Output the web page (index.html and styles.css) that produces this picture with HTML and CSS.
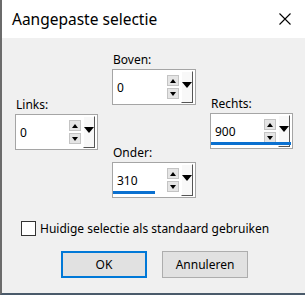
FILE: index.html
```html
<!DOCTYPE html>
<html>
<head>
<meta charset="utf-8">
<link rel="stylesheet" href="styles.css">
</head>
<body>
<div class="dialog">
  <div class="titlebar">
    <span class="title">Aangepaste selectie</span>
    <svg class="close" width="12" height="12" viewBox="0 0 12 12"><path d="M0.5 0.5 L11.5 11.5 M11.5 0.5 L0.5 11.5" stroke="#000" stroke-width="1.1" fill="none"/></svg>
  </div>
  <div class="body">
    <div class="fields">
      <div class="col col-side col-left">
        <div class="field">
          <div class="label">Links:</div>
          <div class="box"><span class="val">0</span>
            <div class="spin"><span class="sb up"></span><span class="sb down"></span></div>
            <span class="drop"></span>
          </div>
        </div>
      </div>
      <div class="col col-mid">
        <div class="field">
          <div class="label">Boven:</div>
          <div class="box"><span class="val">0</span>
            <div class="spin"><span class="sb up"></span><span class="sb down"></span></div>
            <span class="drop"></span>
          </div>
        </div>
        <div class="field">
          <div class="label">Onder:</div>
          <div class="box"><span class="val">310</span>
            <div class="spin"><span class="sb up"></span><span class="sb down"></span></div>
            <span class="drop"></span>
            <span class="bar" style="width:42px"></span>
          </div>
        </div>
      </div>
      <div class="col col-side col-right">
        <div class="field">
          <div class="label">Rechts:</div>
          <div class="box"><span class="val">900</span>
            <div class="spin"><span class="sb up"></span><span class="sb down"></span></div>
            <span class="drop"></span>
            <span class="bar" style="width:80px"></span>
          </div>
        </div>
      </div>
    </div>
    <label class="check"><span class="cb"></span><span>Huidige selectie als standaard gebruiken</span></label>
    <div class="buttons">
      <button class="btn default">OK</button>
      <button class="btn">Annuleren</button>
    </div>
  </div>
</div>
</body>
</html>
```
FILE: styles.css
```css
html, body { margin: 0; padding: 0; }
* { box-sizing: border-box; }
body {
  width: 305px; height: 295px; overflow: hidden;
  font-family: "Noto Sans", "Open Sans", sans-serif;
  font-size: 12px; color: #000;
  background: #f0f0f0;
}
.dialog {
  width: 305px; height: 295px;
  border-left: 2px solid #6b6b6b;
  border-bottom: 2px solid #4a5a6a;
  background: #f0f0f0;
  display: flex; flex-direction: column;
}
.titlebar {
  height: 38px; flex: none; background: #fff;
  display: flex; align-items: center; justify-content: space-between;
  padding: 0 14px 0 10px;
}
.title { font-size: 15.5px; color: #000; }
.close { display: block; }
.body { flex: 1; display: flex; flex-direction: column; }
.fields { display: flex; padding-top: 14px; height: 161px; flex: none; }
.col { display: flex; flex-direction: column; }
.col-left { margin-left: 13px; padding-top: 45px; width: 83px; }
.col-mid { margin-left: 14px; width: 84px; gap: 40px; }
.col-right { margin-left: 14px; padding-top: 44px; width: 83px; }
.label { height: 17px; line-height: 15px; padding-left: 1px; }
.box {
  position: relative; height: 36px;
  background: #fff; border: 1px solid #a5a5a5;
  display: flex; align-items: center;
}
.val { padding-left: 4px; flex: 1; font-size: 12px; }
.spin { display: flex; flex-direction: column; gap: 2px; margin-right: 2px; }
.sb {
  width: 12px; height: 11px; background: #e5e5e5; border: 1px solid #c4c4c4;
  position: relative;
}
.sb::after {
  content: ""; position: absolute; left: 2px; width: 0; height: 0;
  border-left: 3.5px solid transparent; border-right: 3.5px solid transparent;
}
.up::after { top: 2.5px; border-bottom: 4px solid #000; }
.down::after { top: 3px; border-top: 4px solid #000; }
.drop {
  width: 12px; height: 32px; margin-right: 2px;
  background: #f8f8f8;
  border-right: 1px solid #555; border-bottom: 1px solid #555;
  border-left: 1px solid #fff; border-top: 1px solid #fff;
  position: relative;
}
.drop::after {
  content: ""; position: absolute; left: 0px; top: 10px;
  border-left: 5px solid transparent; border-right: 5px solid transparent;
  border-top: 6px solid #000;
}
.bar { position: absolute; left: 0; bottom: 3px; height: 3px; background: #0a70d0; }
.check { display: flex; align-items: center; margin: 21px 0 0 19px; height: 16px; }
.cb { width: 15px; height: 15px; border: 1px solid #333; background: #fff; margin-right: 4px; }
.buttons { display: flex; gap: 15px; margin: 15px 0 0 59px; }
.btn {
  width: 86px; height: 27px; font-family: inherit; font-size: 12px;
  background: #e1e1e1; border: 1px solid #adadad; padding: 0; color: #000;
}
.btn.default { border: 2px solid #0078d7; }
```
